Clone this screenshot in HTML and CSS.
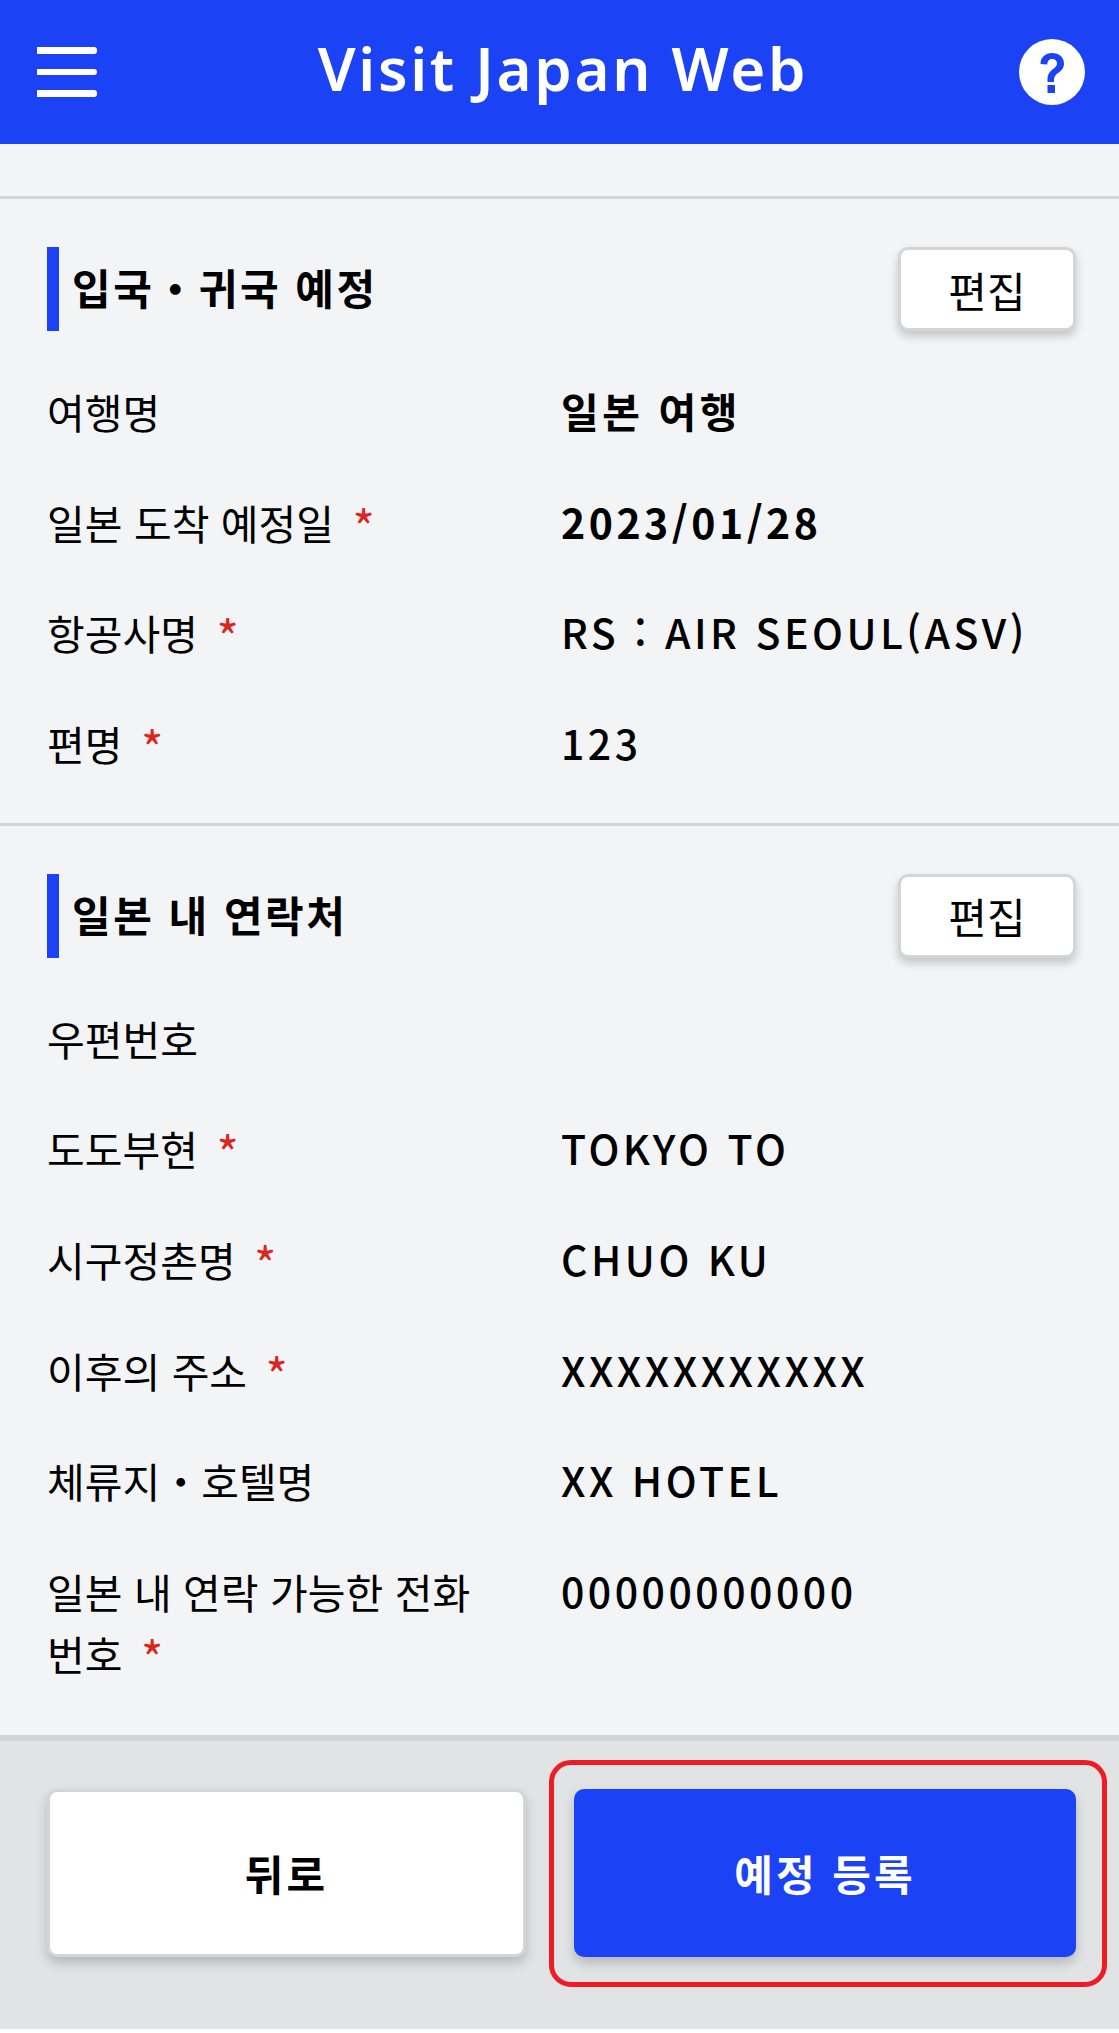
FILE: index.html
```html
<!DOCTYPE html>
<html lang="ko">
<head>
  <meta charset="UTF-8">
  <meta name="viewport" content="width=device-width, initial-scale=1.0">
  <title>Visit Japan Web</title>
  <link rel="stylesheet" href="styles.css">
</head>
<body>
  <header class="top-bar">
    <button class="menu-button" aria-label="menu">
      <span></span><span></span><span></span>
    </button>
    <h1>Visit Japan Web</h1>
    <svg class="help-icon" viewBox="0 0 66 66" aria-label="help">
      <circle cx="33" cy="33" r="33" fill="#fff"/>
      <path d="M21.5 25c0-7 5-11 11.500-11s12 4 12 10.500c0 4.500-2.500 7-5.500 9.300-3 2.300-4.500 3.700-4.500 7.700v1.500h-6.500v-2.500c0-5.500 2.300-8 5.300-10.300 2.700-2 4.200-3.300 4.200-5.700 0-2.800-2-4.500-4.700-4.500-3 0-5 2-5 5.500z" fill="#1b43f5"/>
      <rect x="28.500" y="46" width="7.500" height="8" fill="#1b43f5"/>
    </svg>
  </header>

  <main class="content">
    <section class="plan-section">
      <div class="section-head">
        <h2>입국・귀국 예정</h2>
        <button class="edit-button">편집</button>
      </div>
      <dl class="info-list">
        <div class="info-row">
          <dt>여행명</dt>
          <dd class="strong">일본 여행</dd>
        </div>
        <div class="info-row">
          <dt>일본 도착 예정일 <span class="req">*</span></dt>
          <dd class="strong">2023/01/28</dd>
        </div>
        <div class="info-row">
          <dt>항공사명 <span class="req">*</span></dt>
          <dd>RS : AIR SEOUL(ASV)</dd>
        </div>
        <div class="info-row">
          <dt>편명 <span class="req">*</span></dt>
          <dd>123</dd>
        </div>
      </dl>
    </section>

    <section class="plan-section">
      <div class="section-head">
        <h2>일본 내 연락처</h2>
        <button class="edit-button">편집</button>
      </div>
      <dl class="info-list">
        <div class="info-row">
          <dt>우편번호</dt>
          <dd></dd>
        </div>
        <div class="info-row">
          <dt>도도부현 <span class="req">*</span></dt>
          <dd>TOKYO TO</dd>
        </div>
        <div class="info-row">
          <dt>시구정촌명 <span class="req">*</span></dt>
          <dd>CHUO KU</dd>
        </div>
        <div class="info-row">
          <dt>이후의 주소 <span class="req">*</span></dt>
          <dd>XXXXXXXXXXX</dd>
        </div>
        <div class="info-row">
          <dt>체류지・호텔명</dt>
          <dd>XX HOTEL</dd>
        </div>
        <div class="info-row">
          <dt>일본 내 연락 가능한 전화 번호 <span class="req">*</span></dt>
          <dd>00000000000</dd>
        </div>
      </dl>
    </section>
  </main>

  <footer class="bottom-bar">
    <button class="back-button">뒤로</button>
    <button class="submit-button">예정 등록</button>
    <div class="highlight-box"></div>
  </footer>
</body>
</html>
```

FILE: styles.css
```css
body {
  margin: 0;
  width: 1119px;
  height: 2033px;
  background-color: #fff;
  color: #000;
  font-family: "Noto Sans CJK KR", "Noto Sans", sans-serif;
  font-size: 41px;
}
button {
  font-family: inherit;
  cursor: pointer;
}
.top-bar {
  height: 144px;
  background-color: #1b43f5;
  display: flex;
  align-items: center;
  justify-content: space-between;
  padding: 0 34px 0 37px;
  box-sizing: border-box;
}
.top-bar h1 {
  margin: 0 0 8px 10px;
  color: #fff;
  font-family: "Noto Sans", sans-serif;
  font-size: 60px;
  font-weight: 600;
  letter-spacing: 2.700px;
  line-height: 80px;
}
.menu-button {
  width: 60px;
  padding: 0;
  margin-bottom: 0;
  border: none;
  background: none;
  display: flex;
  flex-direction: column;
  gap: 15px;
}
.menu-button span {
  display: block;
  height: 6.500px;
  background-color: #fff;
  border-radius: 0 3px 3px 0;
}
.help-icon {
  width: 66px;
  height: 66px;
}
.content {
  background-color: #f3f4f6;
  padding: 52px 0 2px;
}
.plan-section {
  border-top: 3px solid #d4d5d7;
  padding: 48px 43px 0 47px;
}
.section-head {
  display: flex;
  align-items: center;
  justify-content: space-between;
  height: 84px;
  margin-bottom: 49px;
}
.section-head h2 {
  margin: 0;
  height: 84px;
  line-height: 80px;
  border-left: 12px solid #1b43f5;
  padding-left: 13px;
  font-size: 42px;
  font-weight: 700;
  letter-spacing: 2.500px;
}
.edit-button {
  width: 178px;
  height: 84px;
  padding: 0;
  background-color: #fff;
  color: #000;
  border: 3px solid #d4d5d7;
  border-radius: 10px;
  font-size: 42px;
  box-shadow: 0 5px 10px rgba(0, 0, 0, 0.2);
}
.info-list {
  margin: 0;
}
.info-row {
  display: grid;
  grid-template-columns: 514px 1fr;
  min-height: 62px;
  padding-bottom: 48.670px;
  line-height: 62px;
}
.info-row dt {
  padding-right: 30px;
  word-break: keep-all;
}
.info-row dd {
  margin: 0;
  font-weight: 500;
  letter-spacing: 3.500px;
  line-height: 60px;
}
.info-row dd.strong {
  font-weight: 700;
}
.req {
  color: #d9261f;
  font-size: 48px;
  line-height: 0;
  margin-left: 7px;
  vertical-align: -6px;
}
.bottom-bar {
  position: relative;
  height: 294px;
  box-sizing: border-box;
  background-color: #e2e3e5;
  border-top: 6px solid #d4d5d7;
  padding: 48px 43px 0 47px;
  display: grid;
  grid-template-columns: 479px 502px;
  column-gap: 48px;
  align-items: start;
}
.back-button,
.submit-button {
  height: 168px;
  font-size: 42px;
  font-weight: 700;
  letter-spacing: 3px;
  border-radius: 10px;
  padding: 0;
}
.back-button {
  background-color: #fff;
  color: #000;
  border: 3px solid #d4d5d7;
  box-shadow: 0 6px 12px rgba(0, 0, 0, 0.2);
}
.submit-button {
  background-color: #1b43f5;
  color: #fff;
  border: none;
  box-shadow: 0 6px 12px rgba(0, 0, 0, 0.2);
}
.highlight-box {
  position: absolute;
  left: 549px;
  top: 19px;
  width: 558px;
  height: 227px;
  box-sizing: border-box;
  border: 5px solid #ee1c25;
  border-radius: 22px;
}
```
